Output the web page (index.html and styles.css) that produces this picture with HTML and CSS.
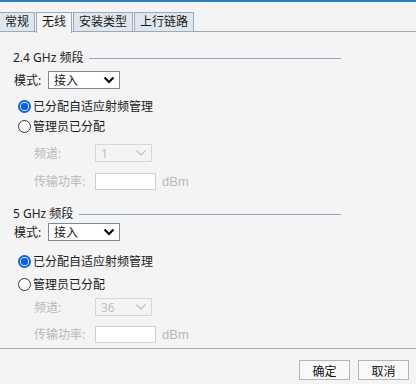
FILE: index.html
```html
<!DOCTYPE html>
<html lang="zh">
<head>
  <meta charset="UTF-8">
  <title>无线设置</title>
  <link rel="stylesheet" href="styles.css">
</head>
<body>

<div class="topbar"></div>

<div class="tabs">
  <div class="tab">常规</div>
  <div class="tab active">无线</div>
  <div class="tab">安装类型</div>
  <div class="tab">上行链路</div>
</div>

<div class="content">
  <!-- 2.4 GHz -->
  <div class="band band-24">
    <div class="band-title"><span>2.4 GHz 频段</span><div class="rule"></div></div>
    <div class="row mode-row">
      <span class="mode-label">模式:</span>
      <div class="select"><span>接入</span><svg width="12" height="8" viewBox="0 0 12 8"><path d="M1.5 1.5 L6 6 L10.5 1.5" fill="none" stroke="#000" stroke-width="2.2"/></svg></div>
    </div>
    <label class="radio-row first"><span class="radio checked"></span>已分配自适应射频管理</label>
    <label class="radio-row"><span class="radio"></span>管理员已分配</label>
    <div class="row field chan">
      <span class="field-label">频道:</span>
      <div class="select disabled"><span>1</span><svg width="12" height="8" viewBox="0 0 12 8"><path d="M1.5 1.5 L6 6 L10.5 1.5" fill="none" stroke="#c4c4c4" stroke-width="1.4"/></svg></div>
    </div>
    <div class="row field power">
      <span class="field-label">传输功率:</span>
      <div class="textbox"></div>
      <span class="unit">dBm</span>
    </div>
  </div>

  <!-- 5 GHz -->
  <div class="band band-5">
    <div class="band-title"><span>5 GHz 频段</span><div class="rule"></div></div>
    <div class="row mode-row">
      <span class="mode-label">模式:</span>
      <div class="select"><span>接入</span><svg width="12" height="8" viewBox="0 0 12 8"><path d="M1.5 1.5 L6 6 L10.5 1.5" fill="none" stroke="#000" stroke-width="2.2"/></svg></div>
    </div>
    <label class="radio-row first"><span class="radio checked"></span>已分配自适应射频管理</label>
    <label class="radio-row"><span class="radio"></span>管理员已分配</label>
    <div class="row field chan">
      <span class="field-label">频道:</span>
      <div class="select disabled"><span>36</span><svg width="12" height="8" viewBox="0 0 12 8"><path d="M1.5 1.5 L6 6 L10.5 1.5" fill="none" stroke="#c4c4c4" stroke-width="1.4"/></svg></div>
    </div>
    <div class="row field power">
      <span class="field-label">传输功率:</span>
      <div class="textbox"></div>
      <span class="unit">dBm</span>
    </div>
  </div>
</div>

<div class="footer">
  <button class="btn">确定</button>
  <button class="btn">取消</button>
</div>

</body>
</html>
```

FILE: styles.css
```css
body {
  margin: 0;
  width: 416px;
  height: 384px;
  background: #f4f4f4;
  font-family: "Noto Sans", "Noto Sans CJK SC", sans-serif;
  font-size: 12px;
  color: #1a1a1a;
  overflow: hidden;
}

.topbar {
  height: 2px;
  background: #2f7fc3;
}

.tabs {
  display: flex;
  margin-top: 10px;
  height: 19px;
  border-bottom: 1px solid #9aaaba;
}

.tab {
  padding: 0 5px;
  line-height: 18px;
  border: 1px solid #9aaaba;
  border-bottom: none;
  background: #dfe7ee;
  margin-right: 1px;
}

.tab:first-child {
  border-left: none;
}

.tab.active {
  background: #f4f4f4;
  height: 20px;
  position: relative;
  z-index: 1;
}

.content {
  padding-left: 13px;
  width: 328px;
}

.band-title {
  display: flex;
  align-items: center;
  height: 16px;
  line-height: 16px;
  color: #222;
}

.band-title .rule {
  flex: 1;
  height: 1px;
  background: #8ea6bf;
  margin-left: 6px;
}

.band-24 .band-title {
  margin-top: 18px;
}

.band-5 .band-title {
  margin-top: 16px;
}

.row {
  display: flex;
  align-items: center;
}

.mode-row {
  padding-left: 1px;
}

.band-24 .mode-row {
  margin-top: 5px;
}

.band-5 .mode-row {
  margin-top: 1px;
}

.mode-label {
  width: 34px;
}

.select {
  box-sizing: border-box;
  display: flex;
  align-items: center;
  justify-content: space-between;
  width: 72px;
  height: 18px;
  border: 1px solid #7a8a9a;
  background: #fff;
  padding: 0 4px 0 5px;
}

.select.disabled {
  width: 57px;
  border-color: #d6d6d6;
  background: #f4f4f4;
  color: #c0c0c0;
}

.radio-row {
  display: flex;
  align-items: center;
  height: 16px;
  padding-left: 5px;
}

.band-24 .radio-row.first {
  margin-top: 9px;
}

.band-24 .radio-row {
  margin-top: 4px;
}

.band-5 .radio-row.first {
  margin-top: 12px;
}

.band-5 .radio-row {
  margin-top: 7px;
}

.radio {
  box-sizing: border-box;
  width: 13px;
  height: 13px;
  border-radius: 50%;
  border: 1px solid #333;
  background: #fff;
  margin-right: 2px;
}

.radio.checked {
  border: 2px solid #0a64d8;
  background: radial-gradient(circle, #0a64d8 0 3.5px, #fff 4px);
}

.field {
  padding-left: 21px;
  color: #b8b8b8;
}

.field-label {
  width: 61px;
}

.band-24 .chan {
  margin-top: 10px;
}

.band-24 .power {
  margin-top: 10px;
}

.band-5 .chan {
  margin-top: 6px;
}

.band-5 .power {
  margin-top: 9px;
}

.textbox {
  box-sizing: border-box;
  width: 61px;
  height: 17px;
  border: 1px solid #cfcfcf;
  background: #fff;
}

.unit {
  margin-left: 6px;
  font-family: "Liberation Sans", sans-serif;
  font-size: 13px;
}

.footer {
  margin-top: 5px;
  border-top: 1px solid #9aaaba;
  display: flex;
  justify-content: flex-end;
  gap: 8px;
  padding: 11px 7px 0 0;
}

.btn {
  width: 51px;
  height: 20px;
  padding: 0;
  border: 1px solid #b4b4b4;
  background: #f9f9f9;
  font-family: "Noto Sans CJK SC", sans-serif;
  font-size: 12px;
  color: #111;
}
```
